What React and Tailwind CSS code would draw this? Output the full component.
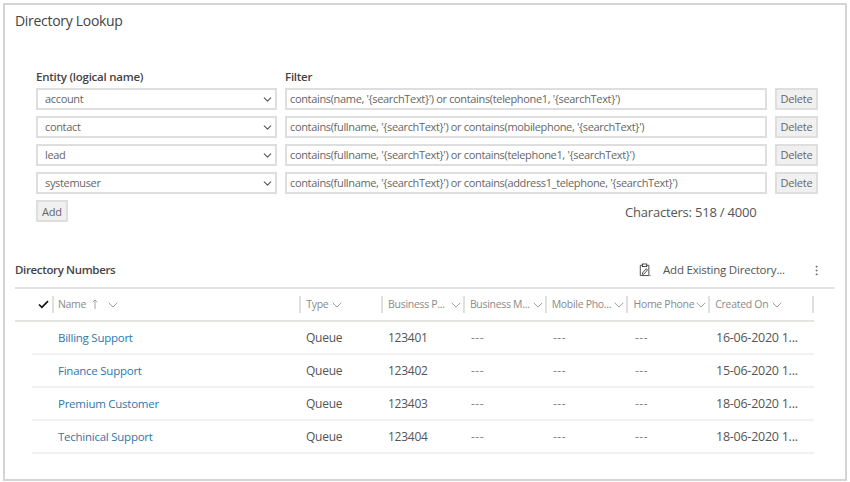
import React from "react";
import { ChevronDown, MoreVertical } from "lucide-react";

const filters = [
  ["account", "contains(name, '{searchText}') or contains(telephone1, '{searchText}')"],
  ["contact", "contains(fullname, '{searchText}') or contains(mobilephone, '{searchText}')"],
  ["lead", "contains(fullname, '{searchText}') or contains(telephone1, '{searchText}')"],
  ["systemuser", "contains(fullname, '{searchText}') or contains(address1_telephone, '{searchText}')"],
];

const columns = [
  ["Type", "w-[82px]"],
  ["Business P...", "w-[82px]"],
  ["Business M...", "w-[82px]"],
  ["Mobile Pho...", "w-[82px]"],
  ["Home Phone", "w-[82px]"],
  ["Created On", "w-[104px]"],
];

const rows = [
  ["Billing Support", "123401", "16-06-2020 1..."],
  ["Finance Support", "123402", "15-06-2020 1..."],
  ["Premium Customer", "123403", "18-06-2020 1..."],
  ["Techinical Support", "123404", "18-06-2020 1..."],
];

const Chevron = ({ className }) => (
  <svg viewBox="0 0 12 7" className={className} fill="none" stroke="currentColor" strokeWidth="1">
    <path d="M0.8 0.8 L6 6 L11.2 0.8" />
  </svg>
);

const FilterRow = ({ entity, filter }) => (
  <div className="flex h-[22px] mb-1.5 text-[11px] tracking-[-0.34px] text-[#666]">
    <div className="w-[241px] border-2 border-[#dedede] flex items-center justify-between pl-[7px] pr-[1px]">
      <span>{entity}</span>
      <ChevronDown size={13} strokeWidth={2} className="text-[#555]" />
    </div>
    <div className="w-[482px] ml-2 border-2 border-[#dedede] flex items-center pl-[3px] whitespace-nowrap overflow-hidden">
      {filter}
    </div>
    <button className="w-[43px] ml-2 pb-[2px] border-2 border-[#dedede] bg-[#f0f0f0] text-[#666] text-[11px] tracking-[-0.2px] leading-none">
      Delete
    </button>
  </div>
);

const App = () => {
  return (
    <div className="h-[482px] w-[850px] overflow-hidden bg-white pt-[3px] pl-[3px] pr-[3px] pb-[1px] font-['Open_Sans',sans-serif]">
      <div className="h-full border-2 border-[#d4d4d4] pl-[10px]">
        <h1 className="mt-[4px] text-[14px] tracking-[-0.3px] leading-6 text-[#444]">Directory Lookup</h1>

        <div className="mt-[36px] pl-[21px]">
          <div className="flex text-[11.5px] tracking-[-0.25px] font-semibold text-[#444] leading-4 mb-[3px]">
            <div className="w-[249px]">Entity (logical name)</div>
            <div>Filter</div>
          </div>
          {filters.map(([entity, filter]) => (
            <FilterRow key={entity} entity={entity} filter={filter} />
          ))}
          <div className="flex items-start">
            <button className="w-8 h-[22px] border-2 border-[#dedede] bg-[#f0f0f0] text-[11px] tracking-[-0.2px] text-[#666] leading-none">
              Add
            </button>
            <div className="ml-[557px] mt-[2px] text-[13px] tracking-[-0.2px] leading-5 text-[#555]">Characters: 518 / 4000</div>
          </div>
        </div>

        <div className="mt-[35px] w-[820px] h-[32px] pb-[4px] flex items-center border-b-2 border-[#e2e2e2]">
          <div className="w-[624px] text-[11.5px] tracking-[-0.35px] font-semibold text-[#444]">Directory Numbers</div>
          <svg viewBox="0 0 14 16" className="w-[12px] h-[14px] text-[#444]" fill="none" stroke="currentColor" strokeWidth="1.1">
            <path d="M4 2.5 H1.5 V14.5 H11.5 V2.5 H9" />
            <rect x="4" y="1" width="5" height="3" />
            <path d="M4 11.5 L8.5 6.5 L10 8 L5.5 13 H4 Z" />
            <path d="M12.5 14.5 H13.5" />
          </svg>
          <div className="w-[147px] pl-[12px] text-[11.5px] tracking-[-0.2px] text-[#555]">Add Existing Directory...</div>
          <MoreVertical size={13} strokeWidth={1.6} className="ml-[12px] text-[#666]" />
        </div>

        <div className="w-[799px]">
          <div className="h-[33px] flex items-center border-b-2 border-[#e4e4e0] text-[10.5px] tracking-[-0.3px] text-[#8a8a8a]">
            <div className="w-[37px] flex justify-end pr-[3px]">
              <svg viewBox="0 0 12 10" className="w-[11px] h-[9px]" fill="none" stroke="#111" strokeWidth="1.9">
                <path d="M1 5 L4.2 8.2 L11 1.2" />
              </svg>
            </div>
            <div className="w-[248px] h-[17px] border-l-2 border-[#e0e0e0] flex items-center pl-[4px]">
              <span>Name</span>
              <svg viewBox="0 0 8 14" className="ml-[6px] w-[6px] h-[11px]" fill="none" stroke="currentColor" strokeWidth="1">
                <path d="M4 13 V1 M1 4 L4 1 L7 4" />
              </svg>
              <Chevron className="ml-[10px] w-[10px] h-[6px]" />
            </div>
            {columns.map(([label, width]) => (
              <div key={label} className={`${width} h-[17px] border-l-2 border-[#e0e0e0] flex items-center justify-between pr-[2px] whitespace-nowrap`}>
                <span className="flex items-center ml-[5px]">
                  {label}
                  {label === "Type" || label === "Created On" ? <Chevron className="ml-1 w-[10px] h-[6px]" /> : null}
                </span>
                {label !== "Type" && label !== "Created On" ? <Chevron className="w-[10px] h-[6px]" /> : null}
              </div>
            ))}
            <div className="h-[17px] border-l-2 border-[#e0e0e0]"></div>
          </div>

          {rows.map(([name, phone, created]) => (
            <div key={name} className="ml-[17px] h-[33px] flex items-center border-b-2 border-[#f2f2f2] text-[12px] leading-5 tracking-[-0.25px] text-[#555]">
              <div className="w-[20px]"></div>
              <div className="w-[248px] pl-[6px] text-[11.5px] tracking-[-0.25px] text-[#2e77ae]">{name}</div>
              <div className="w-[82px] pl-[6px]">Queue</div>
              <div className="w-[82px] pl-[6px]">{phone}</div>
              <div className="w-[82px] pl-[7px] tracking-[0.5px] text-[#888]">---</div>
              <div className="w-[82px] pl-[7px] tracking-[0.5px] text-[#888]">---</div>
              <div className="w-[82px] pl-[7px] tracking-[0.5px] text-[#888]">---</div>
              <div className="pl-[6px] text-[12.5px] whitespace-nowrap">{created}</div>
            </div>
          ))}
        </div>
      </div>
    </div>
  );
};

export default App;
